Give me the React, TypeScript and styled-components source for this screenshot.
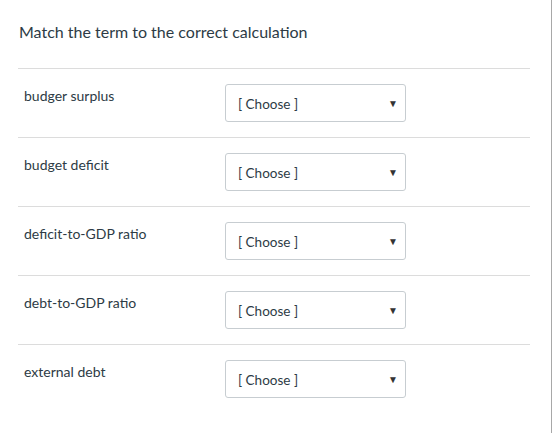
import styled, { createGlobalStyle } from 'styled-components';

const GlobalStyle = createGlobalStyle`
  html, body {
    margin: 0;
    padding: 0;
    background: #fff;
  }
  body {
    font-family: Lato, "Liberation Sans", sans-serif;
    color: #2d3b45;
  }
`;

const Panel = styled.div`
  width: 552px;
  min-height: 433px;
  box-sizing: border-box;
  border-right: 1px solid #a8a8a8;
  padding: 0 21px 0 18px;
`;

const Title = styled.h1`
  font-size: 16px;
  font-weight: normal;
  line-height: 20px;
  margin: 0;
  padding: 22px 0 26px 1px;
  border-bottom: 1px solid #dcdcdc;
`;

const Row = styled.div`
  display: flex;
  align-items: flex-start;
  padding: 15px 0;
  border-bottom: 1px solid ${(p: { $last?: boolean }) => (p.$last ? 'transparent' : '#dcdcdc')};
`;

const Term = styled.div`
  width: 201px;
  padding: 3px 0 0 6px;
  font-size: 14px;
  line-height: 18px;
`;

const Select = styled.div`
  width: 181px;
  height: 38px;
  box-sizing: border-box;
  border: 1px solid #c7cdd1;
  border-radius: 3px;
  display: flex;
  align-items: center;
  justify-content: space-between;
  padding: 2px 7px 0 12px;
  font-size: 13.5px;
  color: #2d3b45;
`;

const Arrow = styled.span`
  font-size: 10px;
  color: #333;
  margin-top: -3px;
`;

const terms = [
  'budger surplus',
  'budget deficit',
  'deficit-to-GDP ratio',
  'debt-to-GDP ratio',
  'external debt',
];

export default function App() {
  return (
    <>
      <GlobalStyle />
      <Panel>
        <Title>Match the term to the correct calculation</Title>
        {terms.map((t, i) => (
          <Row key={t} $last={i === terms.length - 1}>
            <Term>{t}</Term>
            <Select>
              <span>[ Choose ]</span>
              <Arrow>▼</Arrow>
            </Select>
          </Row>
        ))}
      </Panel>
    </>
  );
}
